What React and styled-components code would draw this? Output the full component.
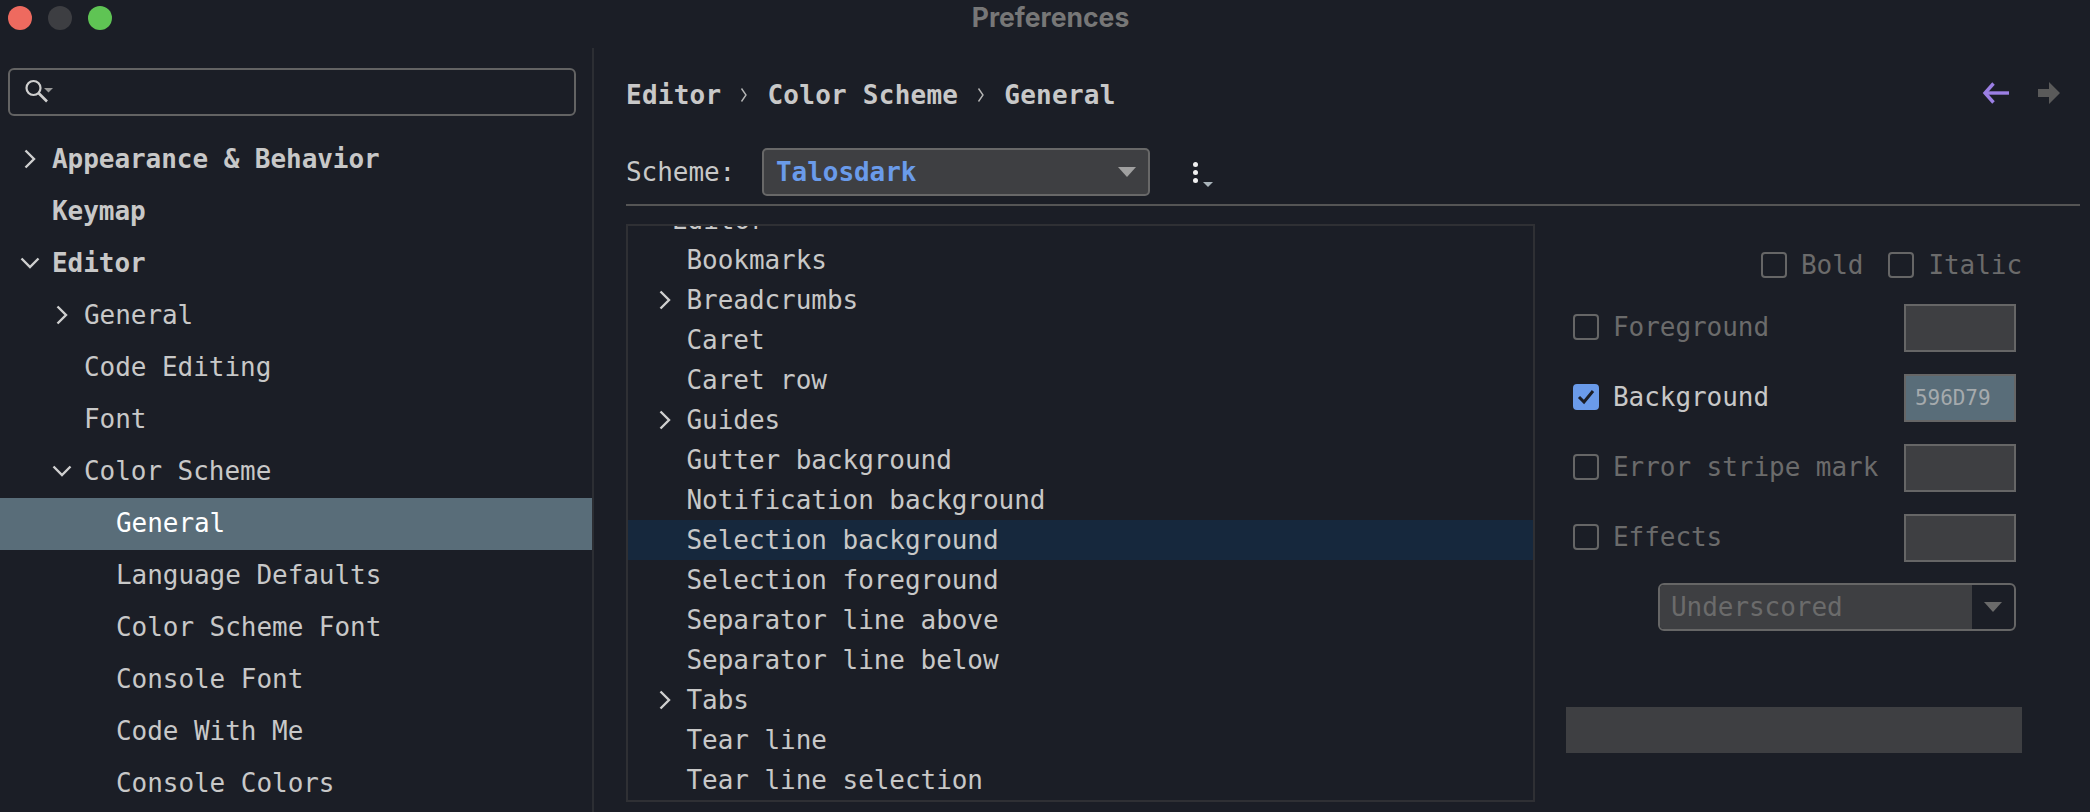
import React from 'react';
import styled, { createGlobalStyle } from 'styled-components';

const sidebarItems = [
  { text: 'Appearance & Behavior', depth: 0, bold: true, arrow: 'right' },
  { text: 'Keymap', depth: 0, bold: true },
  { text: 'Editor', depth: 0, bold: true, arrow: 'down' },
  { text: 'General', depth: 1, arrow: 'right' },
  { text: 'Code Editing', depth: 1 },
  { text: 'Font', depth: 1 },
  { text: 'Color Scheme', depth: 1, arrow: 'down' },
  { text: 'General', depth: 2, selected: true },
  { text: 'Language Defaults', depth: 2 },
  { text: 'Color Scheme Font', depth: 2 },
  { text: 'Console Font', depth: 2 },
  { text: 'Code With Me', depth: 2 },
  { text: 'Console Colors', depth: 2 },
];

const listItems = [
  { text: 'Bookmarks' },
  { text: 'Breadcrumbs', arrow: true },
  { text: 'Caret' },
  { text: 'Caret row' },
  { text: 'Guides', arrow: true },
  { text: 'Gutter background' },
  { text: 'Notification background' },
  { text: 'Selection background', selected: true },
  { text: 'Selection foreground' },
  { text: 'Separator line above' },
  { text: 'Separator line below' },
  { text: 'Tabs', arrow: true },
  { text: 'Tear line' },
  { text: 'Tear line selection' },
];

const colorRows = [
  { text: 'Foreground' },
  { text: 'Background', checked: true, value: '596D79' },
  { text: 'Error stripe mark' },
  { text: 'Effects' },
];

function Chevron({ down }) {
  return (
    <ChevronIcon viewBox='0 0 24 24'>
      <polyline points={down ? '3.5,7.5 12,16 20.5,7.5' : '7.5,3.5 16,12 7.5,20.5'} />
    </ChevronIcon>
  );
}

function CheckBox({ checked }) {
  return (
    <Box $checked={checked}>
      {checked && (
        <svg width='18' height='16' viewBox='0 0 18 16'>
          <polyline points='2,8 7,13 16,2' fill='none' stroke='#1b1e26' strokeWidth='3' />
        </svg>
      )}
    </Box>
  );
}

function CrumbSep() {
  return (
    <Sep>
      <svg width='8' height='16' viewBox='0 0 8 16'>
        <polyline points='1.5,1.5 6,8 1.5,14.5' fill='none' stroke='#b5b5b5' strokeWidth='1.4' />
      </svg>
    </Sep>
  );
}

export default function App() {
  return (
    <Window>
      <GlobalStyle />
      <TitleBar>
        <Lights>
          <Light $color='#ee6a5f' />
          <Light $color='#3d3e42' />
          <Light $color='#5fc454' />
        </Lights>
        <Title>Preferences</Title>
      </TitleBar>

      <Body>
        <Sidebar>
          <SearchBox>
            <svg width='30' height='26' viewBox='0 0 30 26'>
              <circle cx='8.5' cy='9' r='7' fill='none' stroke='#cfcfcf' strokeWidth='2.2' />
              <line x1='13.5' y1='14' x2='22' y2='22.5' stroke='#cfcfcf' strokeWidth='2.6' />
              <polygon points='19,9 28,9 23.5,13.5' fill='#9a9a9a' />
            </svg>
          </SearchBox>
          <Tree>
            {sidebarItems.map((item, i) => (
              <TreeRow key={i} $depth={item.depth} $bold={item.bold} $selected={item.selected}>
                <ArrowSlot $width={34}>
                  {item.arrow && <Chevron down={item.arrow === 'down'} />}
                </ArrowSlot>
                {item.text}
              </TreeRow>
            ))}
          </Tree>
        </Sidebar>

        <Main>
          <Header>
            <Crumbs>
              <span>Editor</span>
              <CrumbSep />
              <span>Color Scheme</span>
              <CrumbSep />
              <span>General</span>
            </Crumbs>
            <NavArrows>
              <svg width='27' height='22' viewBox='0 0 27 22'>
                <polyline points='11.5,1.5 3,11 11.5,20.5' fill='none' stroke='#9b7fe3' strokeWidth='3.4' />
                <line x1='3' y1='11' x2='27' y2='11' stroke='#9b7fe3' strokeWidth='3.4' />
              </svg>
              <svg width='22' height='22' viewBox='0 0 22 22'>
                <polygon points='0,7 11,7 11,0 22,11 11,22 11,15 0,15' fill='#5a5a5a' />
              </svg>
            </NavArrows>
          </Header>

          <SchemeRow>
            <SchemeLabel>Scheme:</SchemeLabel>
            <SchemeSelect>
              Talosdark
              <Triangle $size={9} $color='#a0a0a0' />
            </SchemeSelect>
            <MoreButton>
              <Dot />
              <Dot />
              <Dot />
              <MoreCaret />
            </MoreButton>
          </SchemeRow>

          <Rule />

          <Content>
            <ListBox>
              <ListScroll>
                <ListHeadRow>Editor</ListHeadRow>
                {listItems.map((item, i) => (
                  <ListRow key={i} $selected={item.selected}>
                    <ArrowSlot $width={34}>{item.arrow && <Chevron />}</ArrowSlot>
                    {item.text}
                  </ListRow>
                ))}
              </ListScroll>
            </ListBox>

            <Options>
              <FontStyles>
                <Check>
                  <CheckBox />
                  Bold
                </Check>
                <Check>
                  <CheckBox />
                  Italic
                </Check>
              </FontStyles>

              <ColorRows>
                {colorRows.map((row) => (
                  <ColorRow key={row.text}>
                    <RowCheck $active={row.checked}>
                      <CheckBox checked={row.checked} />
                      {row.text}
                    </RowCheck>
                    <Swatch $filled={row.checked}>{row.value}</Swatch>
                  </ColorRow>
                ))}
              </ColorRows>

              <EffectSelect>
                <EffectValue>Underscored</EffectValue>
                <EffectButton>
                  <Triangle $size={9} $color='#6a6a6a' />
                </EffectButton>
              </EffectSelect>

              <Preview />
            </Options>
          </Content>
        </Main>
      </Body>
    </Window>
  );
}

const GlobalStyle = createGlobalStyle`
  html, body {
    margin: 0;
    padding: 0;
    background: #1b1e26;
  }
`;

const Window = styled.div`
  width: 2090px;
  height: 812px;
  overflow: hidden;
  background: #1b1e26;
  color: #c8c8c8;
  font-family: 'DejaVu Sans Mono', 'Liberation Mono', monospace;
  font-size: 26px;
  letter-spacing: -0.05px;
`;

const TitleBar = styled.div`
  position: relative;
  height: 48px;
  display: flex;
  align-items: center;
  justify-content: center;
`;

const Lights = styled.div`
  position: absolute;
  left: 8px;
  top: 6px;
  display: flex;
  gap: 16px;
`;

const Light = styled.div`
  width: 24px;
  height: 24px;
  border-radius: 50%;
  background: ${(p) => p.$color};
`;

const Title = styled.div`
  margin: -15px 0 0 11px;
  font-family: Inter, 'Liberation Sans', sans-serif;
  font-size: 26.5px;
  font-weight: 700;
  letter-spacing: 0;
  color: #777777;
`;

const Body = styled.div`
  display: flex;
  height: 764px;
`;

const Sidebar = styled.div`
  width: 592px;
  flex: none;
  padding-top: 20px;
  border-right: 2px solid #2c2e33;
`;

const SearchBox = styled.div`
  box-sizing: border-box;
  width: 568px;
  height: 48px;
  margin-left: 8px;
  padding-left: 15px;
  display: flex;
  align-items: center;
  border: 2px solid #636363;
  border-radius: 6px;
`;

const Tree = styled.div`
  margin-top: 18px;
`;

const TreeRow = styled.div`
  height: 52px;
  display: flex;
  align-items: center;
  padding-left: ${(p) => 18 + p.$depth * 32}px;
  padding-bottom: 2px;
  box-sizing: border-box;
  font-weight: ${(p) => (p.$bold ? 700 : 400)};
  color: ${(p) => (p.$selected ? '#ffffff' : '#c8c8c8')};
  background: ${(p) => (p.$selected ? '#596d79' : 'transparent')};
`;

const ArrowSlot = styled.div`
  width: ${(p) => p.$width}px;
  flex: none;
  display: flex;
  align-items: center;
`;

const ChevronIcon = styled.svg`
  width: 24px;
  height: 24px;
  fill: none;
  stroke: #cfcfcf;
  stroke-width: 2.4;
`;

const Main = styled.div`
  flex: 1;
  min-width: 0;
  padding: 0 10px 0 32px;
`;

const Header = styled.div`
  height: 100px;
  padding-right: 20px;
  display: flex;
  align-items: flex-start;
  justify-content: space-between;
`;

const Crumbs = styled.div`
  display: flex;
  align-items: center;
  height: 48px;
  margin-top: 23px;
  font-weight: 700;
  letter-spacing: 0.25px;
`;

const Sep = styled.span`
  width: 46px;
  display: flex;
  justify-content: center;
`;

const NavArrows = styled.div`
  margin-top: 34px;
  display: flex;
  align-items: center;
  gap: 29px;
`;

const SchemeRow = styled.div`
  display: flex;
  align-items: center;
  height: 48px;
`;

const SchemeLabel = styled.div`
  width: 136px;
`;

const SchemeSelect = styled.div`
  box-sizing: border-box;
  width: 388px;
  height: 48px;
  padding: 0 12px;
  display: flex;
  align-items: center;
  justify-content: space-between;
  background: #3e3f42;
  border: 2px solid #686868;
  border-radius: 5px;
  color: #6a9bea;
  font-weight: 700;
`;

const Triangle = styled.span`
  width: 0;
  height: 0;
  border-left: ${(p) => p.$size}px solid transparent;
  border-right: ${(p) => p.$size}px solid transparent;
  border-top: ${(p) => p.$size + 1}px solid ${(p) => p.$color};
`;

const MoreButton = styled.div`
  position: relative;
  margin-left: 43px;
  display: flex;
  flex-direction: column;
  gap: 3px;
`;

const Dot = styled.span`
  width: 5px;
  height: 5px;
  border-radius: 50%;
  background: #f0f0f0;
`;

const MoreCaret = styled.span`
  position: absolute;
  left: 10px;
  top: 20px;
  width: 0;
  height: 0;
  border-left: 5px solid transparent;
  border-right: 5px solid transparent;
  border-top: 5px solid #aab4ba;
`;

const Rule = styled.div`
  height: 2px;
  margin-top: 8px;
  background: #555555;
`;

const Content = styled.div`
  display: flex;
  margin-top: 18px;
`;

const ListBox = styled.div`
  box-sizing: border-box;
  width: 909px;
  height: 578px;
  flex: none;
  overflow: hidden;
  border: 2px solid #2f3034;
`;

const ListScroll = styled.div`
  margin-top: -26px;
`;

const ListHeadRow = styled.div`
  height: 40px;
  box-sizing: border-box;
  padding-left: 44px;
  display: flex;
  align-items: center;
`;

const ListRow = styled.div`
  height: 40px;
  box-sizing: border-box;
  padding-left: 24.5px;
  display: flex;
  align-items: center;
  background: ${(p) => (p.$selected ? '#16283d' : 'transparent')};
`;

const Options = styled.div`
  flex: 1;
  min-width: 0;
  box-sizing: border-box;
  padding-right: 64px;
`;

const FontStyles = styled.div`
  display: flex;
  justify-content: flex-end;
  gap: 25px;
  margin: 26px -6px 0 0;
`;

const Check = styled.div`
  display: flex;
  align-items: center;
  gap: 14px;
  white-space: nowrap;
  color: ${(p) => (p.$active ? '#c8c8c8' : '#6b6b6b')};
`;

const RowCheck = styled(Check)`
  margin-bottom: 2px;
`;

const Box = styled.span`
  box-sizing: border-box;
  width: 26px;
  height: 26px;
  display: flex;
  align-items: center;
  justify-content: center;
  border-radius: 4px;
  border: 2px solid ${(p) => (p.$checked ? '#6a9bea' : '#666666')};
  background: ${(p) => (p.$checked ? '#6a9bea' : 'transparent')};
`;

const ColorRows = styled.div`
  display: flex;
  flex-direction: column;
  gap: 22px;
  margin-top: 24px;
  padding-left: 38px;
`;

const ColorRow = styled.div`
  display: flex;
  align-items: center;
  justify-content: space-between;
`;

const Swatch = styled.div`
  box-sizing: border-box;
  width: 112px;
  height: 48px;
  padding-left: 9px;
  display: flex;
  align-items: center;
  border: 2px solid #666666;
  background: ${(p) => (p.$filled ? '#596d79' : '#3e3f42')};
  color: #a5aaad;
  font-size: 21px;
`;

const EffectSelect = styled.div`
  box-sizing: border-box;
  display: flex;
  width: 358px;
  height: 48px;
  margin: 21px 0 0 123px;
  border: 2px solid #666666;
  border-radius: 6px;
  overflow: hidden;
`;

const EffectValue = styled.div`
  flex: 1;
  padding-left: 11px;
  display: flex;
  align-items: center;
  background: #3e3f42;
  color: #6b6b6b;
`;

const EffectButton = styled.div`
  width: 42px;
  display: flex;
  align-items: center;
  justify-content: center;
`;

const Preview = styled.div`
  width: 456px;
  height: 46px;
  margin: 76px 0 0 31px;
  background: #3e3f42;
`;
